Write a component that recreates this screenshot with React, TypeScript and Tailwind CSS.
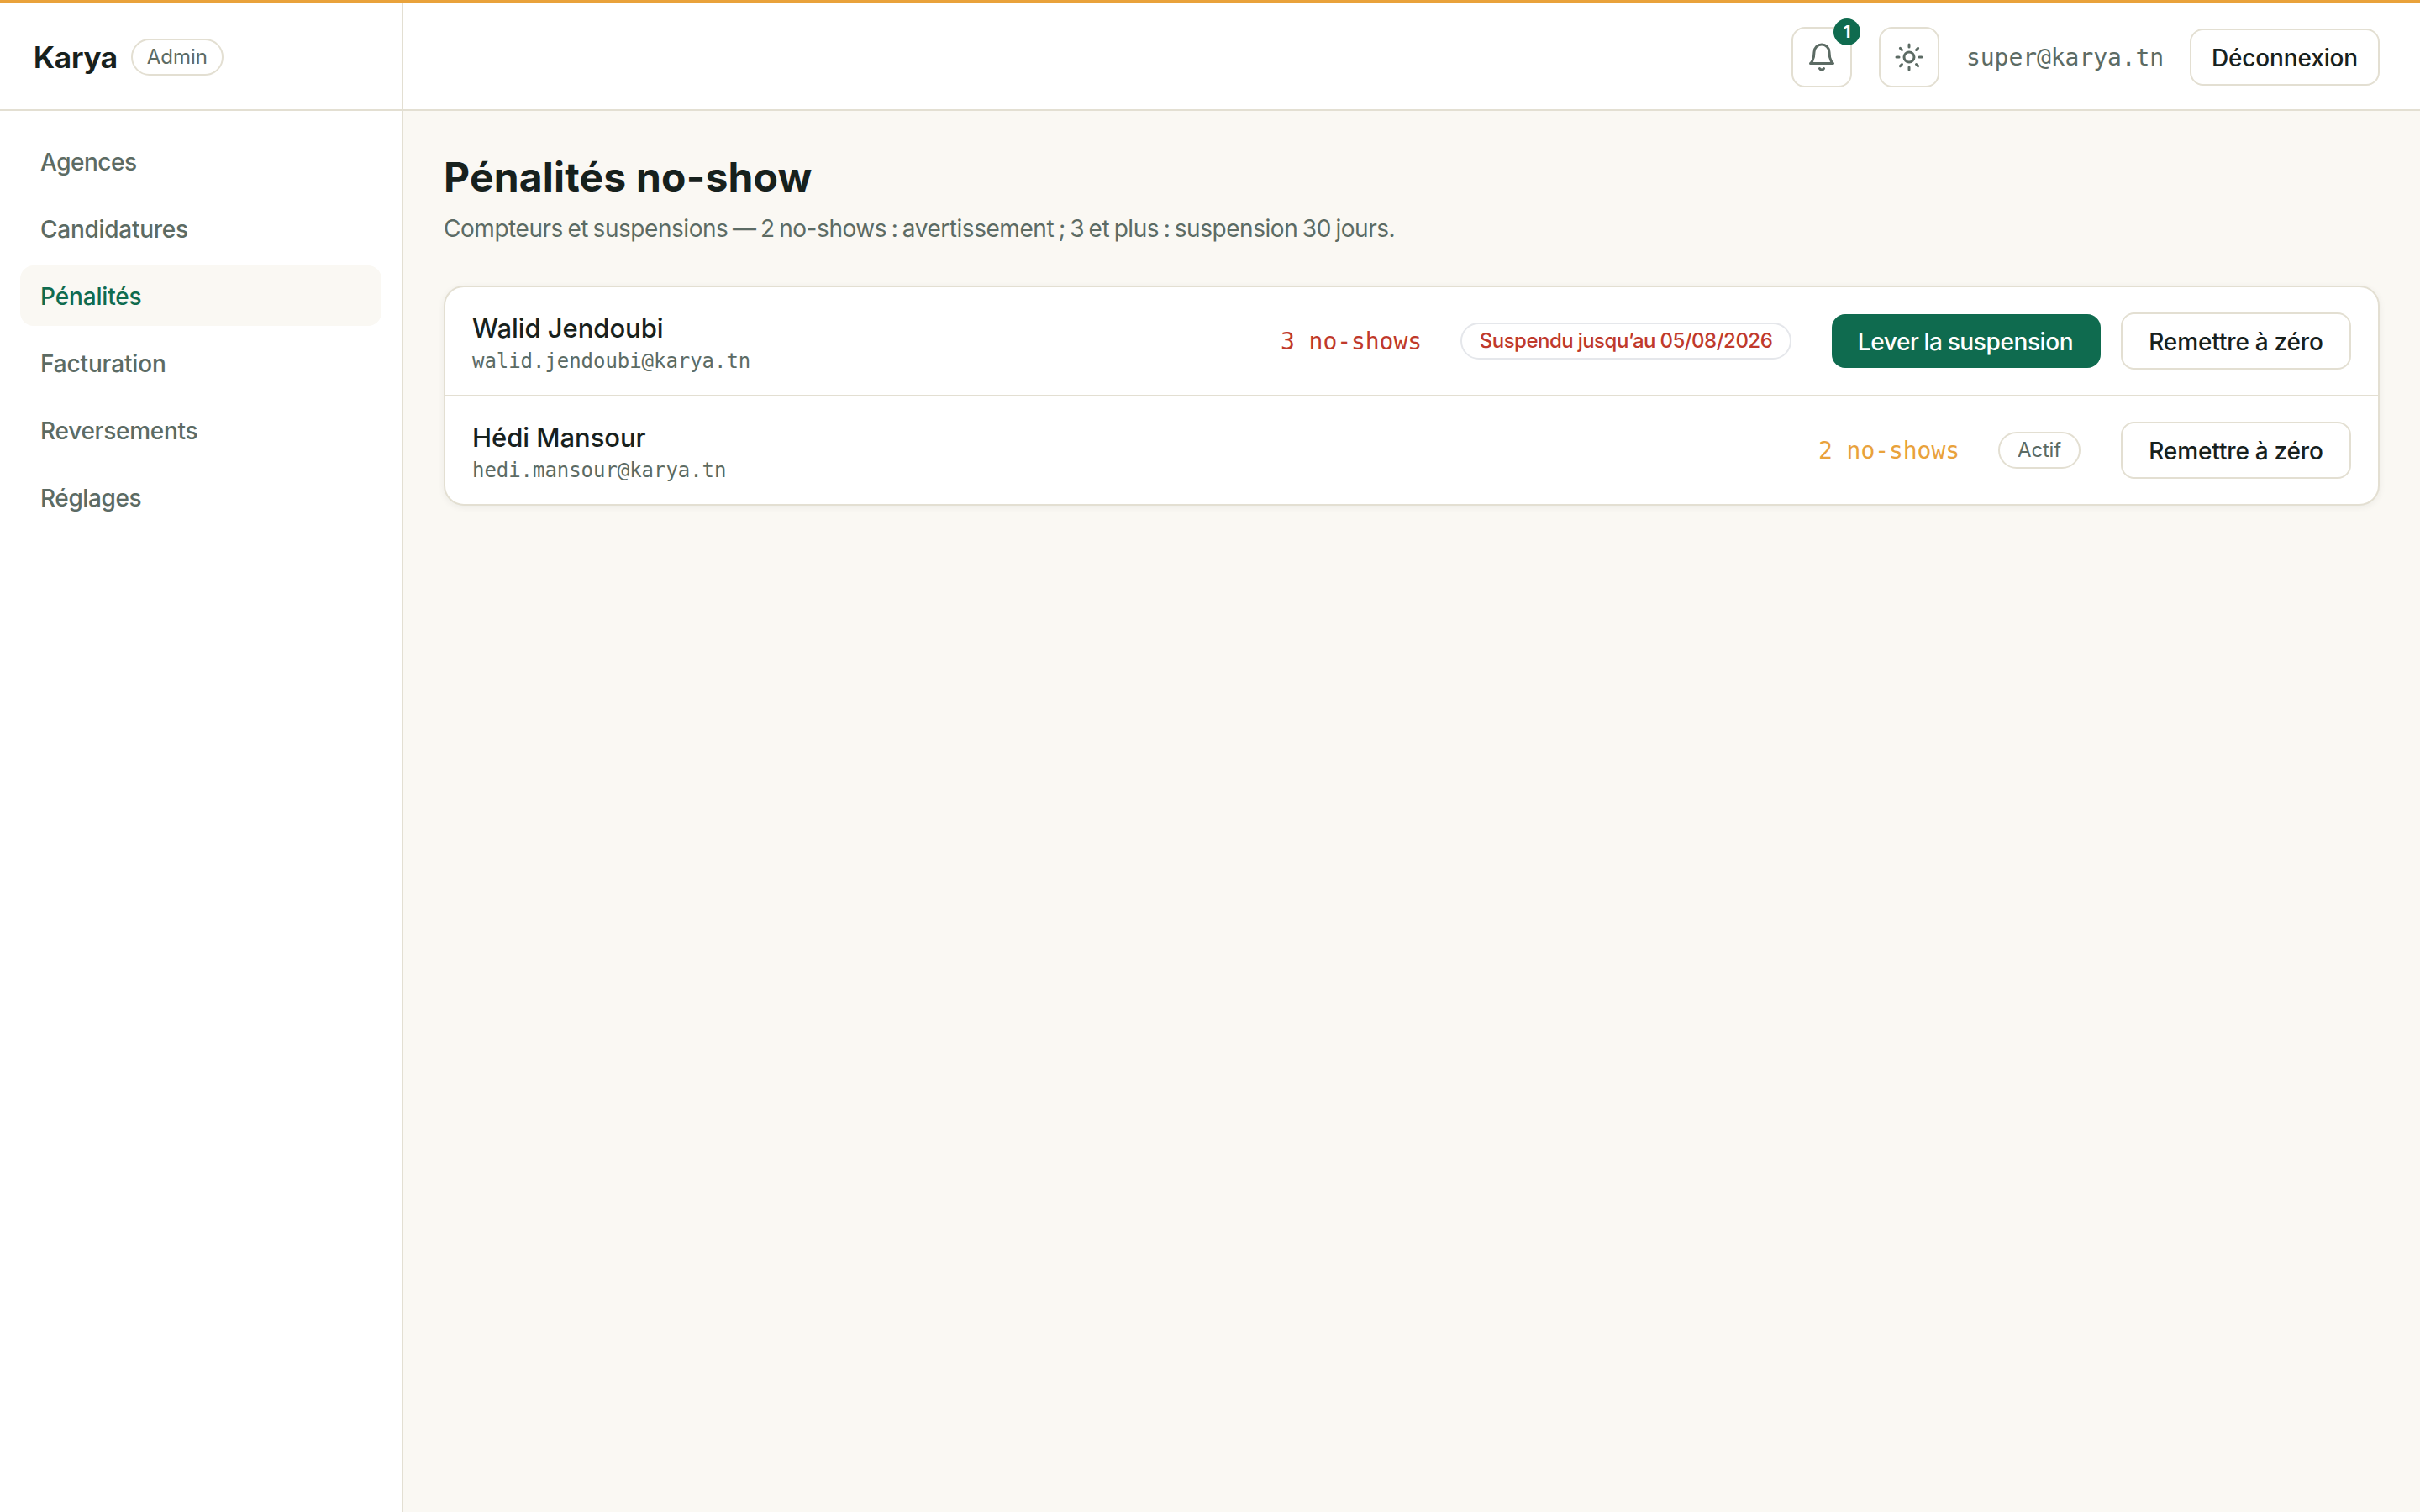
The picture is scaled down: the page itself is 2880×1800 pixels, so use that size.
import { Sun } from "lucide-react";

const NAV = [
  { label: "Agences", tracking: "tracking-[-0.5px]" },
  { label: "Candidatures", tracking: "tracking-[-0.27px]" },
  { label: "Pénalités", tracking: "tracking-[-0.15px]", active: true },
  { label: "Facturation", tracking: "tracking-[-0.15px]" },
  { label: "Reversements", tracking: "tracking-[-0.27px]" },
  { label: "Réglages", tracking: "tracking-[-0.4px]" },
];

interface Penalty {
  name: string;
  email: string;
  count: number;
  suspendedUntil?: string;
}

const PENALTIES: Penalty[] = [
  { name: "Walid Jendoubi", email: "walid.jendoubi@karya.tn", count: 3, suspendedUntil: "05/08/2026" },
  { name: "Hédi Mansour", email: "hedi.mansour@karya.tn", count: 2 },
];

function BellIcon() {
  return (
    <svg width="36" height="36" viewBox="0 0 24 24" fill="none" stroke="currentColor" strokeWidth="2" strokeLinecap="round" strokeLinejoin="round">
      <path d="M6 8a6 6 0 0 1 12 0c0 7 3 9 3 9H3s3-2 3-9" />
      <path d="M10.3 21a1.94 1.94 0 0 0 3.4 0" />
    </svg>
  );
}

function Sidebar() {
  return (
    <aside className="flex w-[480px] shrink-0 flex-col border-r-2 border-[#e3dfd2] bg-white">
      <div className="flex h-32 items-center gap-4 border-b-2 border-[#e3dfd2] pt-0.5 pl-10">
        <span className="text-[35px] leading-none font-bold tracking-[-0.3px]">Karya</span>
        <span className="flex h-11 w-[110px] items-center justify-center rounded-full border-2 border-[#e3dfd2] text-2xl text-[#5c6b64]">
          Admin
        </span>
      </div>
      <nav className="flex flex-col gap-2 p-6">
        {NAV.map((item) => (
          <a
            key={item.label}
            className={`flex h-[72px] items-center rounded-2xl px-6 pt-px text-[28px] font-medium ${item.tracking} ${
              item.active ? "bg-[#faf8f3] text-[#0f6b4f]" : "text-[#5c6b64]"
            }`}
          >
            {item.label}
          </a>
        ))}
      </nav>
    </aside>
  );
}

function Header() {
  return (
    <header className="flex h-32 items-center justify-end gap-8 border-b-2 border-[#e3dfd2] bg-white px-12 pt-0.5">
      <button className="relative flex size-[72px] items-center justify-center rounded-2xl border-2 border-[#e3dfd2] text-[#5c6b64]">
        <BellIcon />
        <span className="absolute -top-3 -right-3 flex size-8 items-center justify-center rounded-full bg-[#0f6b4f] text-xl font-bold text-white">
          1
        </span>
      </button>
      <button className="flex size-[72px] items-center justify-center rounded-2xl border-2 border-[#e3dfd2] text-[#5c6b64]">
        <Sun size={36} />
      </button>
      <span className="w-[234px] pt-0.5 font-['DejaVu_Sans_Mono',monospace] text-[28px] tracking-[-0.06px] whitespace-nowrap text-[#5c6b64]">
        super@karya.tn
      </span>
      <button className="h-[68px] w-[226px] rounded-2xl border-2 border-[#e3dfd2] pt-0.5 text-[28px] font-medium tracking-[-0.15px]">
        Déconnexion
      </button>
    </header>
  );
}

function PenaltyRow({ penalty }: { penalty: Penalty }) {
  const suspended = Boolean(penalty.suspendedUntil);

  return (
    <li className="box-content flex h-32 items-center justify-between px-8">
      <div className="flex flex-col pt-0.5">
        <span className="text-[31px] leading-[46px] font-medium tracking-[-0.05px]">{penalty.name}</span>
        <span className="font-['DejaVu_Sans_Mono',monospace] text-2xl leading-8 tracking-[-0.05px] text-[#5c6b64]">
          {penalty.email}
        </span>
      </div>
      <div className="flex items-center">
        <span
          className={`mr-[46px] pt-0.5 font-['DejaVu_Sans_Mono',monospace] text-[28px] tracking-[-0.06px] ${
            suspended ? "text-[#c0392b]" : "text-[#e9a23b]"
          }`}
        >
          {penalty.count} no-shows
        </span>
        {suspended ? (
          <span className="mr-12 flex h-11 w-[394px] items-center justify-center rounded-full border-2 border-gray-200 text-2xl font-medium tracking-[-0.5px] whitespace-nowrap text-[#c0392b] [word-spacing:-0.5px]">
            Suspendu jusqu’au {penalty.suspendedUntil}
          </span>
        ) : (
          <span className="mr-12 flex h-11 w-[98px] items-center justify-center rounded-full border-2 border-[#e3dfd2] text-2xl tracking-[-0.2px] text-[#5c6b64]">
            Actif
          </span>
        )}
        {suspended && (
          <button className="mr-6 h-16 w-80 rounded-2xl bg-[#0f6b4f] pt-0.5 pr-0.5 text-[28px] font-medium tracking-[-0.4px] text-white [word-spacing:-1px]">
            Lever la suspension
          </button>
        )}
        <button className="h-[68px] w-[274px] rounded-2xl border-2 border-[#e3dfd2] pt-0.5 text-[28px] font-medium tracking-[-0.1px] [word-spacing:-0.5px]">
          Remettre à zéro
        </button>
      </div>
    </li>
  );
}

export default function App() {
  return (
    <div className="flex h-[1800px] w-[2880px] flex-col overflow-hidden border-t-4 border-[#e9a23b] bg-[#faf8f3] font-[Inter,sans-serif] text-[#17211d]">
      <div className="flex flex-1">
        <Sidebar />
        <div className="flex flex-1 flex-col">
          <Header />
          <main className="flex flex-col p-12">
            <h1 className="text-5xl leading-[62px] font-bold tracking-[0.2px]">Pénalités no-show</h1>
            <p className="mt-2.5 text-[28px] leading-10 tracking-[-0.45px] text-[#5c6b64] [word-spacing:-1.9px]">
              Compteurs et suspensions — 2 no-shows : avertissement ; 3 et plus : suspension 30 jours.
            </p>
            <ul className="mt-12 divide-y-2 divide-[#e3dfd2] rounded-3xl border-2 border-[#e3dfd2] bg-white shadow-[0_2px_8px_rgba(23,33,29,0.06)]">
              {PENALTIES.map((p) => (
                <PenaltyRow key={p.email} penalty={p} />
              ))}
            </ul>
          </main>
        </div>
      </div>
    </div>
  );
}
